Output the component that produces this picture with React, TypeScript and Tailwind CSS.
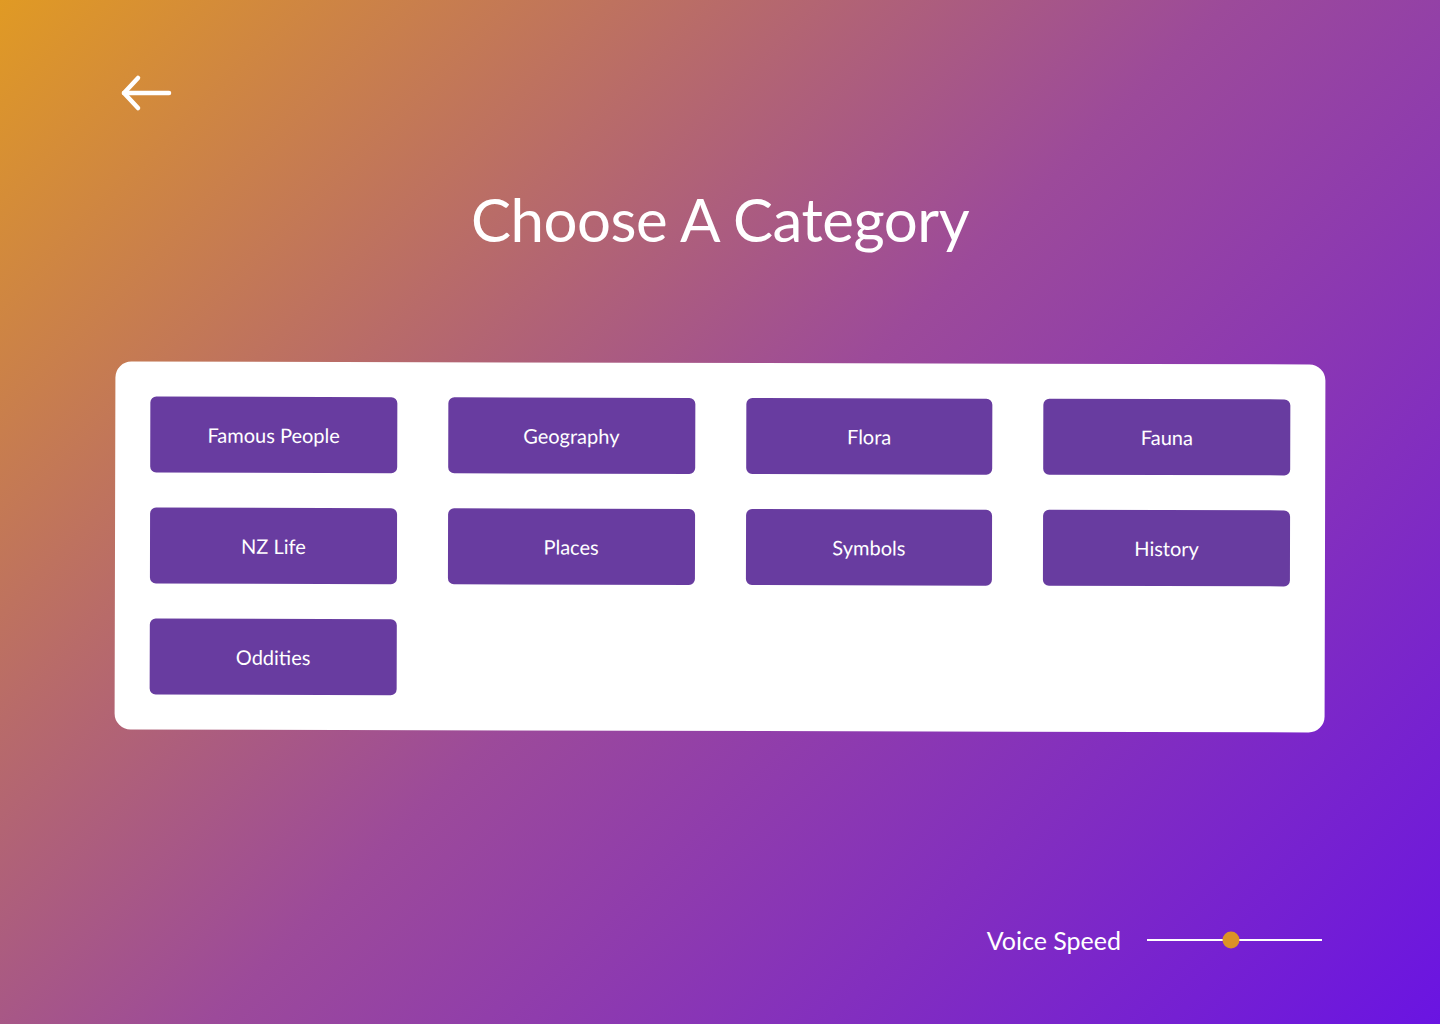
import React, { useState } from 'react';

const categories = [
  'Famous People',
  'Geography',
  'Flora',
  'Fauna',
  'NZ Life',
  'Places',
  'Symbols',
  'History',
  'Oddities',
];

const App: React.FC = () => {
  const [speed, setSpeed] = useState(48);

  return (
    <div className="min-h-screen w-full flex flex-col bg-[linear-gradient(135deg,#e09a24_0%,#9c4a9a_50%,#6a14e2_100%)] font-['Lato','Open_Sans',sans-serif] text-white">
      <div className="pl-[120px] pt-[74px]">
        <button className="block" aria-label="Back">
          <svg width="52" height="38" viewBox="0 0 52 38" fill="none" stroke="white" strokeWidth="4.5" strokeLinecap="round" strokeLinejoin="round">
            <path d="M4 19H49" />
            <path d="M18 4L4 19L18 34" />
          </svg>
        </button>
      </div>

      <h1 className="mt-[77px] text-center text-[60px] leading-none tracking-[-0.5px]">Choose A Category</h1>

      <div className="mx-[115px] mt-[114px] rotate-[0.14deg] rounded-2xl bg-white p-[35px]">
        <div className="grid grid-cols-4 gap-x-[51px] gap-y-[35px]">
          {categories.map((c) => (
            <button
              key={c}
              className="h-[76px] rounded-md bg-[#683ca0] text-[20px] text-white hover:bg-[#5a3190]"
            >
              {c}
            </button>
          ))}
        </div>
      </div>

      <div className="flex-1" />

      <div className="flex items-center justify-end gap-[26px] pr-[118px] pb-[65px]">
        <span className="text-[25px]">Voice Speed</span>
        <div className="relative h-[18px] w-[175px]">
          <div className="absolute left-0 right-0 top-1/2 h-[2px] -translate-y-1/2 bg-white" />
          <div
            className="absolute top-1/2 h-[17px] w-[17px] -translate-x-1/2 -translate-y-1/2 rounded-full bg-[#dc9227]"
            style={{ left: `${speed}%` }}
          />
          <input
            type="range"
            min={0}
            max={100}
            value={speed}
            onChange={(e) => setSpeed(Number(e.target.value))}
            className="absolute inset-0 w-full cursor-pointer opacity-0"
          />
        </div>
      </div>
    </div>
  );
};

export default App;
